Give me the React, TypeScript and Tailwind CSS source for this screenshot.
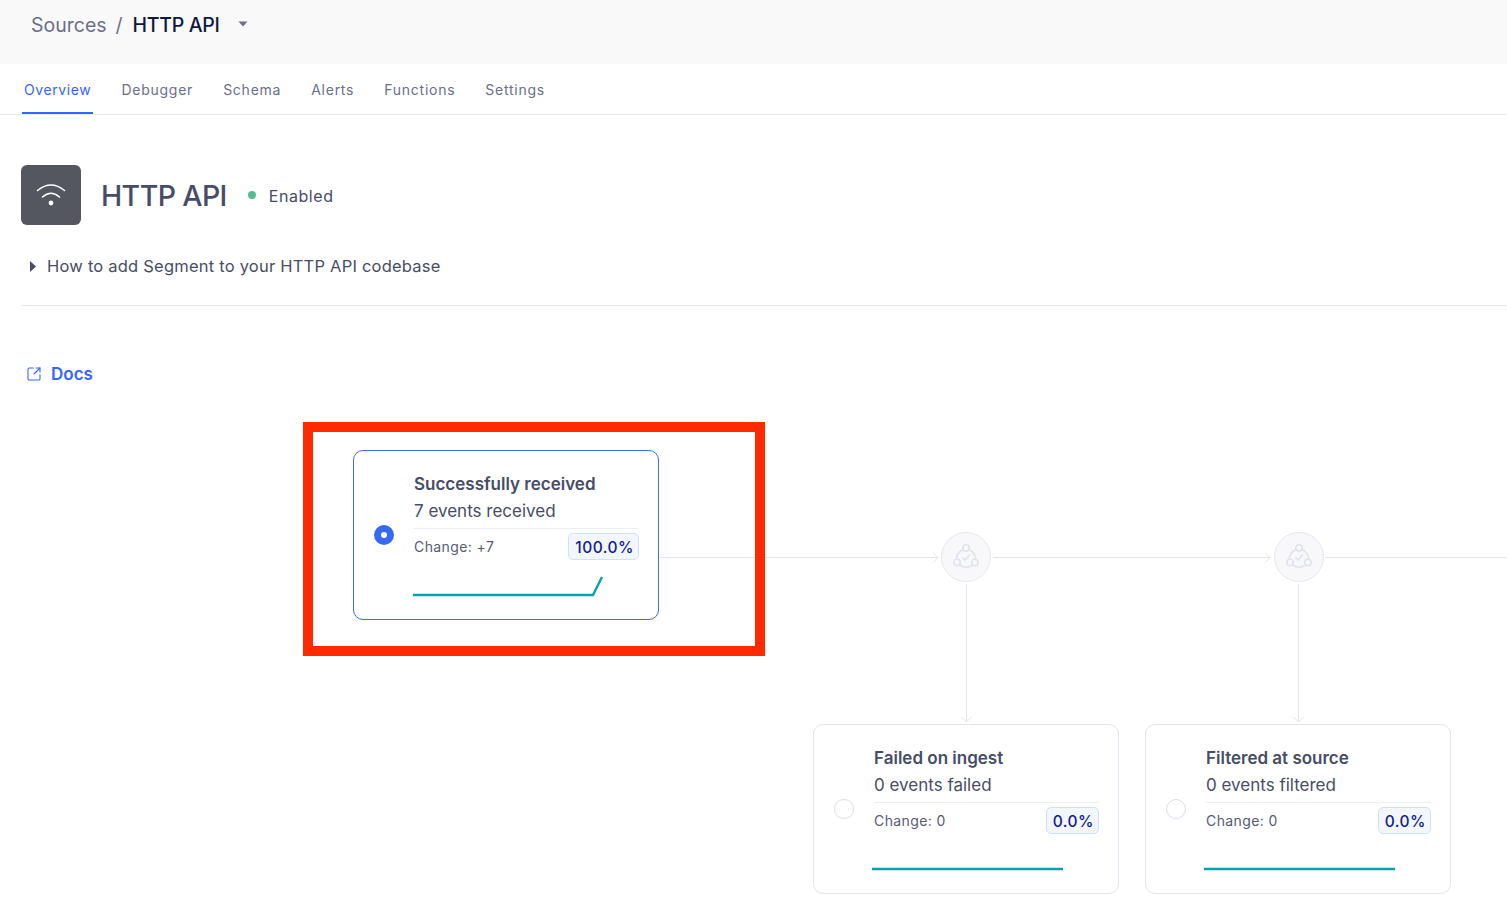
import { SquareArrowOutUpRight } from 'lucide-react';

const tabs = ['Overview', 'Debugger', 'Schema', 'Alerts', 'Functions', 'Settings'];

interface StatCardProps {
  title: string;
  subtitle: string;
  change: string;
  percent: string;
  selected?: boolean;
  spark: string;
  className: string;
}

function StatCard({ title, subtitle, change, percent, selected, spark, className }: StatCardProps) {
  return (
    <div
      className={`absolute flex h-[170px] w-[306px] items-center rounded-[10px] border bg-white pl-5 pr-[19px] ${
        selected ? 'border-[#3b6cf6]' : 'border-[#e3e4ee]'
      } ${className}`}
    >
      {selected ? (
        <div className="flex h-5 w-5 shrink-0 items-center justify-center rounded-full bg-[#366af6]">
          <div className="h-1.5 w-1.5 rounded-full bg-white" />
        </div>
      ) : (
        <div className="h-5 w-5 shrink-0 rounded-full border border-[#dcdde8] bg-white" />
      )}
      <div className="ml-5 flex h-full min-w-0 flex-1 flex-col pt-[21px]">
        <div className="text-[17px] leading-6 font-semibold text-[#474d66]">{title}</div>
        <div className="mt-[3px] text-[17px] leading-6 text-[#474d66]">{subtitle}</div>
        <div className="mt-[5px] flex items-start justify-between border-t border-[#edeff5] pt-1">
          <span className="mt-1 text-sm leading-5 tracking-[0.4px] text-[#555b75]">{change}</span>
          <span className="rounded-[5px] border border-[#d0e2fb] bg-[#f3f6fc] pt-0.5 pr-1 pl-1.5 text-[15.5px] leading-[23px] font-medium tracking-[0.5px] text-[#0c2191]">
            {percent}
          </span>
        </div>
        <svg className="mt-4 -ml-0.5" width="192" height="22" viewBox="0 0 192 22" fill="none">
          <path d={spark} stroke="#06a3ad" strokeWidth="2.4" />
        </svg>
      </div>
    </div>
  );
}

function NodeIcon({ className }: { className: string }) {
  return (
    <div className={`absolute h-[50px] w-[50px] rounded-full border border-[#e6e7f0] bg-[#f8f8fa] ${className}`}>
      <svg className="-m-px" width="50" height="50" viewBox="0 0 50 50" fill="none" stroke="#e1e3ed" strokeWidth="1.6">
        <circle cx="25" cy="16" r="3.2" />
        <circle cx="16" cy="30.5" r="3.2" />
        <circle cx="34" cy="30.5" r="3.2" />
        <path d="M21.9 17.5C18 19.5 15.5 23 15.3 27.3" />
        <path d="M28.1 17.5C32 19.5 34.5 23 34.7 27.3" />
        <path d="M18.5 33C22.5 35.8 27.5 35.8 31.5 33" />
        <path d="M21.5 25.5L24 28L29 22.5" />
      </svg>
    </div>
  );
}

export default function App() {
  return (
    <div className="relative h-[924px] overflow-hidden bg-white font-['Inter',sans-serif]">
      <div className="flex h-16 items-start bg-[#f9f9f9] pt-[13px] pl-[31px] text-[19.5px] leading-6">
        <span className="text-[#696f8c]">Sources</span>
        <span className="ml-[9px] text-[#696f8c]">/</span>
        <span className="ml-2.5 font-medium tracking-[-0.3px] text-[#101840]">HTTP API</span>
        <svg className="mt-2 ml-[18px]" width="10" height="6" viewBox="0 0 10 6">
          <path d="M0.5 0.5H9.5L5 5.5Z" fill="#696f8c" />
        </svg>
      </div>

      <div className="flex h-[51px] items-stretch gap-[26px] border-b border-[#e6e8f0] pl-[22px]">
        {tabs.map((tab, i) => (
          <div
            key={tab}
            className={`flex items-center px-0.5 text-sm ${
              i === 0
                ? 'border-b-2 border-[#3366ff] pt-1 tracking-[0.6px] text-[#3366ff]'
                : 'pt-0.5 tracking-[0.75px] text-[#696f8c]'
            }`}
          >
            {tab}
          </div>
        ))}
      </div>

      <div className="pl-[21px]">
        <div className="mt-[50px] flex items-center">
          <div className="flex h-[60px] w-[60px] items-center justify-center rounded-md bg-[#54575f]">
            <svg width="60" height="60" viewBox="0 0 60 60" fill="none" stroke="#ffffff" strokeWidth="1.6" strokeLinecap="round">
              <path d="M16.5 25.5Q30 14.5 43.5 25.5" />
              <path d="M21.5 32Q30 24.5 38.5 32" />
              <circle cx="30" cy="38" r="2.4" fill="#ffffff" stroke="none" />
            </svg>
          </div>
          <h1 className="ml-5 pt-0.5 text-[28.5px] leading-9 font-medium tracking-[-0.6px] text-[#474d66]">HTTP API</h1>
          <div className="ml-[21px] h-2 w-2 rounded-full bg-[#52bd94]" />
          <span className="ml-[13px] pt-0.5 text-base tracking-[0.55px] text-[#474d66]">Enabled</span>
        </div>

        <div className="mt-[29px] flex h-6 items-center">
          <svg className="ml-[9px]" width="6" height="11" viewBox="0 0 6 11">
            <path d="M0 0L6 5.5L0 11Z" fill="#474d66" />
          </svg>
          <span className="ml-[11px] text-[16.5px] tracking-[0.22px] text-[#474d66]">How to add Segment to your HTTP API codebase</span>
        </div>

        <div className="mt-[27px] h-px bg-[#e6e8f0]" />

        <div className="mt-[57px] flex h-6 items-center text-[#3366ff]">
          <SquareArrowOutUpRight className="-mt-0.5 ml-[5px]" size={16} strokeWidth={1.6} />
          <span className="ml-[9px] text-[17px] font-semibold">Docs</span>
        </div>
      </div>

      {/* flow diagram, everything below sits on a free canvas */}
      <div className="absolute top-[400px] left-0 h-[524px] w-full">
        <div className="absolute top-[157px] left-[660px] h-px w-[278px] bg-[#e3e4ee]" />
        <svg className="absolute top-[152px] left-[932px]" width="7" height="11" viewBox="0 0 7 11" fill="none" stroke="#e1e3ed">
          <path d="M1 0.5L6 5.5L1 10.5" />
        </svg>
        <NodeIcon className="top-[132px] left-[941px]" />

        <div className="absolute top-[157px] left-[993px] h-px w-[277px] bg-[#e3e4ee]" />
        <svg className="absolute top-[152px] left-[1264px]" width="7" height="11" viewBox="0 0 7 11" fill="none" stroke="#e1e3ed">
          <path d="M1 0.5L6 5.5L1 10.5" />
        </svg>
        <NodeIcon className="top-[132px] left-[1274px]" />
        <div className="absolute top-[157px] left-[1325px] h-px w-[182px] bg-[#e3e4ee]" />

        <div className="absolute top-[184px] left-[965.5px] h-[138px] w-[1.5px] bg-[#e3e4ee]" />
        <svg className="absolute top-[316px] left-[961px]" width="11" height="7" viewBox="0 0 11 7" fill="none" stroke="#e1e3ed">
          <path d="M0.5 1L5.5 6L10.5 1" />
        </svg>
        <div className="absolute top-[184px] left-[1297.5px] h-[138px] w-[1.5px] bg-[#e3e4ee]" />
        <svg className="absolute top-[316px] left-[1293px]" width="11" height="7" viewBox="0 0 11 7" fill="none" stroke="#e1e3ed">
          <path d="M0.5 1L5.5 6L10.5 1" />
        </svg>

        <StatCard
          className="top-[50px] left-[353px]"
          title="Successfully received"
          subtitle="7 events received"
          change="Change: +7"
          percent="100.0%"
          selected
          spark="M1 19H181L190 1"
        />
        <StatCard
          className="top-[324px] left-[813px]"
          title="Failed on ingest"
          subtitle="0 events failed"
          change="Change: 0"
          percent="0.0%"
          spark="M0 19H191"
        />
        <StatCard
          className="top-[324px] left-[1145px]"
          title="Filtered at source"
          subtitle="0 events filtered"
          change="Change: 0"
          percent="0.0%"
          spark="M0 19H191"
        />

        {/* red annotation box from the original screenshot */}
        <div className="absolute top-[22px] left-[303px] h-[234px] w-[462px] border-[10px] border-[#ff2a00]" />
      </div>
    </div>
  );
}
